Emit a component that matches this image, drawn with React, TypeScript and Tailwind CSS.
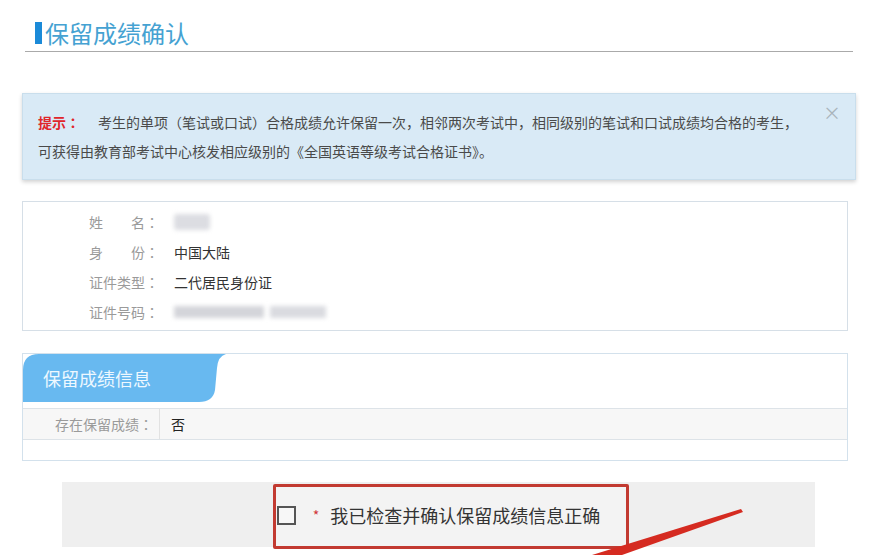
import React from 'react';

const font = { fontFamily: '"Noto Sans CJK SC", "Noto Sans", sans-serif' };

// centred full-width colon, as the original page's font draws it
const Colon = () => <span className="font-['Noto_Sans_CJK_TC',sans-serif]">：</span>;

const InfoRow = ({ label, children }: { label: string; children: React.ReactNode }) => (
  <div className="flex items-center h-[30px]">
    <span className="w-[85px] text-[#9a9a9a]">
      {label}
      <Colon />
    </span>
    <span className="text-[#333]">{children}</span>
  </div>
);

const App = () => {
  return (
    <div className="relative w-full h-[555px] overflow-hidden bg-white text-[14px]" style={font}>
      <div className="pt-[22px]">
        {/* Page title */}
        <div className="ml-[25px] w-[828px] border-b border-[#aaaaaa] pb-[7px]">
          <div className="flex items-center h-[22px] pl-[10px]">
            <span className="w-[7px] h-[22px] bg-[#1b8ad8]" />
            <span className="ml-[3px] text-[24px] leading-[22px] text-[#45a2d2]">保留成绩确认</span>
          </div>
        </div>

        {/* Notice */}
        <div className="relative mt-[41px] ml-[22px] w-[834px] h-[87px] bg-[#d9eaf6] border border-[#c9deec] shadow-[0_2px_4px_rgba(0,0,0,0.18)] pt-[14px] px-[15px] text-[#4a4a4a] leading-[29px]">
          <div className="flex">
            <span className="w-[60px] font-bold text-[#e0262b]">
              提示
              <Colon />
            </span>
            <span>考生的单项（笔试或口试）合格成绩允许保留一次，相邻两次考试中，相同级别的笔试和口试成绩均合格的考生，</span>
          </div>
          <div>可获得由教育部考试中心核发相应级别的《全国英语等级考试合格证书》。</div>
          <span className="absolute right-[14px] top-[6px] text-[18px] leading-[24px] text-[#a9b4bb]">×</span>
        </div>

        {/* Candidate info */}
        <div className="mt-[21px] ml-[22px] w-[826px] h-[130px] border border-[#d6dfe7] pt-[5px] pl-[66px]">
          <InfoRow label="姓　　名">
            <span className="block w-[36px] h-[16px] rounded-[3px] bg-[#dcdde2] blur-[2px]" />
          </InfoRow>
          <InfoRow label="身　　份">中国大陆</InfoRow>
          <InfoRow label="证件类型">二代居民身份证</InfoRow>
          <InfoRow label="证件号码">
            <span className="flex items-center gap-[6px] blur-[2px]">
              <span className="block w-[90px] h-[12px] bg-[#d4d5da]" />
              <span className="block w-[56px] h-[12px] bg-[#dadbe0]" />
            </span>
          </InfoRow>
        </div>

        {/* Retained score panel */}
        <div className="mt-[22px] ml-[22px] w-[826px] h-[108px] border border-[#d3e1ec]">
          <div className="relative w-[205px] h-[48px] flex items-center pl-[20px]">
            <svg className="absolute inset-0" width="205" height="48" viewBox="0 0 205 48">
              <path
                d="M0 16 Q0 0 16 0 L203 0 Q195 2 194 14 L192 36 Q190 48 176 48 L0 48 Z"
                fill="#68b9f0"
              />
            </svg>
            <span className="relative text-[18px] text-[#eef8ff]">保留成绩信息</span>
          </div>
          <div className="mt-[6px] flex h-[32px] border-y border-[#dde3e8] bg-[#f7f7f7]">
            <div className="w-[137px] border-r border-[#e2e2e2] flex items-center justify-end pr-[6px] text-[#9a9a9a]">
              存在保留成绩
              <Colon />
            </div>
            <div className="flex items-center pl-[11px] text-[#222]">否</div>
          </div>
        </div>

        {/* Confirmation bar */}
        <div className="relative mt-[21px] ml-[62px] w-[753px] h-[65px] bg-[#efefef] flex items-center justify-center pt-[2px]">
          <div className="absolute left-[211px] top-[2px] w-[356px] h-[65px] bg-[#f3f3f3] border-[3px] border-[#c23a31] rounded-[2px]" />
          <span className="relative w-[19px] h-[19px] border-2 border-[#555] bg-[#f7f7f7]" />
          <span className="relative ml-[17px] text-[14px] text-[#d0373a]">*</span>
          <span className="relative ml-[11px] text-[18px] text-[#333]">我已检查并确认保留成绩信息正确</span>
        </div>
      </div>

      {/* Red annotation arrow */}
      <svg className="absolute left-0 top-0 pointer-events-none" width="871" height="555" viewBox="0 0 871 555">
        <polygon points="741,509 743,512 622,555 592,555" fill="#d52b21" />
      </svg>
    </div>
  );
};

export default App;
